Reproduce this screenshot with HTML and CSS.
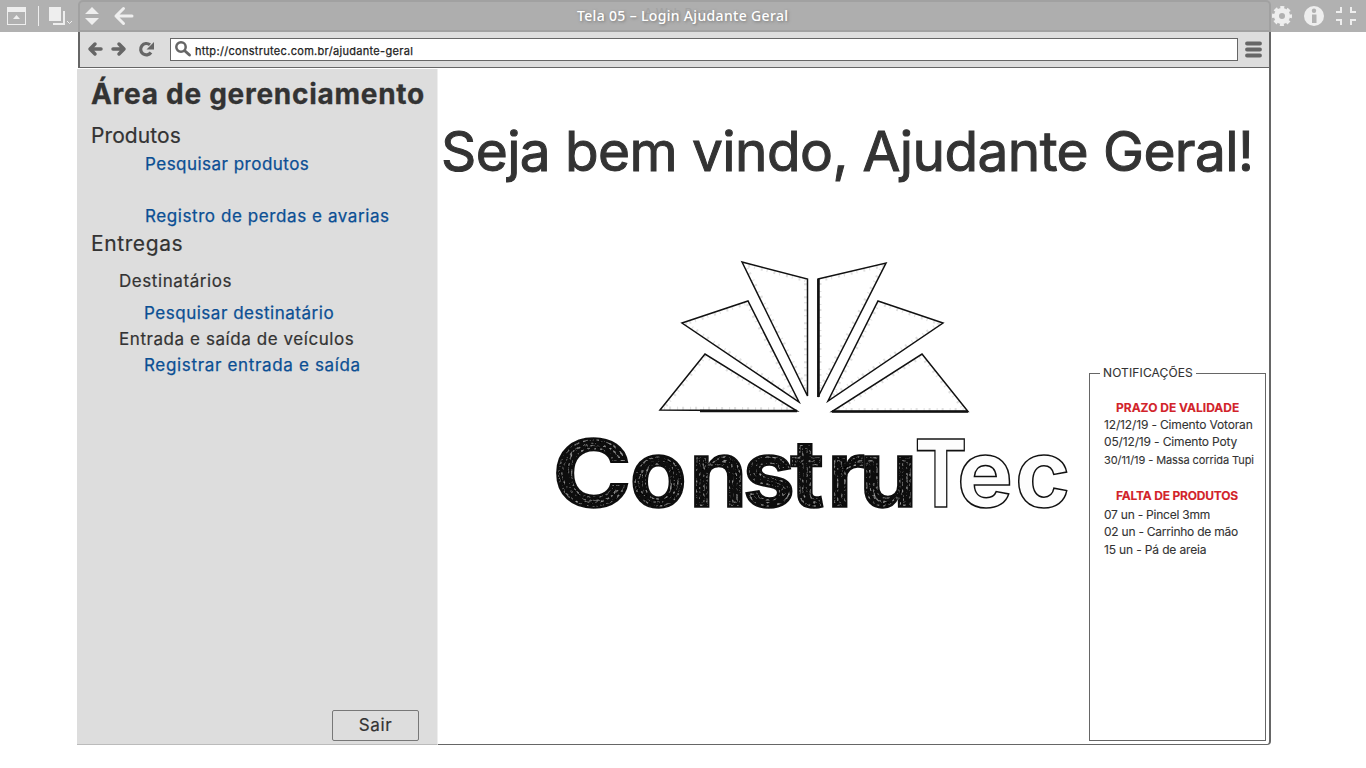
FILE: index.html
```
<!DOCTYPE html>
<html lang="pt-BR">
<head>
<meta charset="utf-8">
<title>Tela 05 – Login Ajudante Geral</title>
<link rel="stylesheet" href="styles.css">
</head>
<body>
<header class="toolbar">
  <div class="tools tools-left">
    <svg width="78" height="32" viewBox="0 0 78 32">
      <path class="lit" fill-rule="evenodd" d="M7 7h19v18H7zM8 12v12h17V12zM13 19l3.500-4 3.500 4z"/>
      <path class="lit" d="M38 6h1v20h-1zM49 7h12v14H49zM63 11h2v14H53v-2h10z"/>
      <path class="lit-line thin" d="M67 21l2.500 2.500L72 21"/>
    </svg>
  </div>
  <div class="title-area">
    <svg class="title-icons" width="60" height="28" viewBox="0 0 60 28">
      <path class="lit" d="M5 12l7-7 7 7zM5 16h14l-7 7z"/>
      <path class="lit-line thick" d="M52 14H36M43.500 6.500L36 14l7.500 7.500"/>
    </svg>
    <span class="ghost">A Web Page</span>
    <h1 class="title">Tela 05 – Login Ajudante Geral</h1>
  </div>
  <div class="tools">
    <svg width="95" height="32" viewBox="0 0 95 32">
      <circle class="gear-ring" cx="11" cy="16" r="5.500"/>
      <circle class="gear-teeth" cx="11" cy="16" r="8.500"/>
      <circle class="lit" cx="43" cy="16" r="10"/>
      <path class="hole" d="M41 14.500h4.500V23H41z"/><circle class="hole" cx="43" cy="10.800" r="2.200"/>
      <path class="lit-line corner" d="M65 12h5V7M85 12h-5V7M65 20h5v5M85 20h-5v5"/>
    </svg>
  </div>
</header>
<div class="window">
  <nav class="chrome">
    <svg class="nav-icons" width="90" height="36" viewBox="0 0 90 36">
      <path class="ink-line arrow" d="M21 17H10.500M15 12l-5 5 5 5M33 17h10.500M39 12l5 5-5 5"/>
      <path class="ink-arc" d="M71 20.500A5.700 5.700 0 1 1 70 12.800"/>
      <path class="ink" d="M74 10v7.500h-7.500z"/>
    </svg>
    <div class="address">
      <svg width="17" height="17" viewBox="0 0 17 17"><circle class="lens" cx="6" cy="6" r="4.700"/><path class="ink-line" d="M10 10l4.500 4"/></svg>
      <span class="url">http://construtec.com.br/ajudante-geral</span>
    </div>
    <svg class="menu" width="17" height="17" viewBox="0 0 17 17"><path class="menu-line" d="M2 2.500h13M2 8.500h13M2 14.500h13"/></svg>
  </nav>
  <div class="content">
    <aside class="sidebar">
      <h2 class="area">Área de gerenciamento</h2>
      <h3 class="group g1">Produtos</h3>
      <a class="link l1">Pesquisar produtos</a>
      <a class="link l2">Registro de perdas e avarias</a>
      <h3 class="group g2">Entregas</h3>
      <h4 class="sub s1">Destinatários</h4>
      <a class="link l3">Pesquisar destinatário</a>
      <h4 class="sub s2">Entrada e saída de veículos</h4>
      <a class="link l4">Registrar entrada e saída</a>
      <button class="exit">Sair</button>
    </aside>
    <main class="main">
      <p class="welcome">Seja bem vindo, Ajudante Geral!</p>
      <div class="row">
        <svg class="logo" width="520" height="284" viewBox="552 256 520 284">
          <defs>
            <filter id="engrave" x="-5%" y="-10%" width="110%" height="120%">
              <feMorphology in="SourceAlpha" operator="erode" radius="2" result="a"/>
              <feMorphology in="SourceAlpha" operator="erode" radius="3" result="b"/>
              <feComposite in="a" in2="b" operator="out" result="c"/>
              <feMorphology in="SourceAlpha" operator="erode" radius="5" result="d"/>
              <feMorphology in="SourceAlpha" operator="erode" radius="6" result="e"/>
              <feComposite in="d" in2="e" operator="out" result="f"/>
              <feMerge result="g"><feMergeNode in="c"/><feMergeNode in="f"/></feMerge>
              <feTurbulence type="fractalNoise" baseFrequency="0.300" numOctaves="2" seed="4"/>
              <feColorMatrix values="0 0 0 0 .4  0 0 0 0 .4  0 0 0 0 .4  3 0 0 0 -1.500" result="n"/>
              <feComposite in="n" in2="g" operator="in" result="h"/>
              <feMerge><feMergeNode in="SourceGraphic"/><feMergeNode in="h"/></feMerge>
            </filter>
            <clipPath id="sheets"><path d="M742 262L807.500 279V396zM682 323L748 301L799 402zM660 410L705 354L797 411zM818 279L886 263L818 397zM878 301L943 323L828 401zM922 354L968 411.500H832z"/></clipPath>
          </defs>
          <path class="grain" clip-path="url(#sheets)" d="M742 262L807.500 279V396zM682 323L748 301L799 402zM660 410L705 354L797 411zM818 279L886 263L818 397zM878 301L943 323L828 401zM922 354L968 411.500H832z"/>
          <g class="sheet">
            <path d="M742 262L807.500 279V396zM682 323L748 301L799 402zM660 410L705 354L797 411zM818 279L886 263L818 397zM878 301L943 323L828 401zM922 354L968 411.500H832z"/>
            <path class="edge" d="M818.500 279V397M832 411.500h136M700 411h97"/>
          </g>
          <g class="dark" filter="url(#engrave)">
            <text class="word" transform="translate(552 506.500) scale(1.150 1)">C</text>
            <text class="word" y="506.500" x="629.500 689 742.500 790 827 859">onstru</text>
          </g>
          <g class="light">
            <text class="word" transform="translate(914.500 506.500) scale(.84 1)">T</text>
            <text class="word" y="506.500" x="957 1015">ec</text>
          </g>
        </svg>
        <section class="notes">
          <div class="legend">NOTIFICAÇÕES</div>
          <h5 class="alert p1">PRAZO DE VALIDADE</h5>
          <p class="note n1">12/12/19 - Cimento Votoran</p>
          <p class="note n2">05/12/19 - Cimento Poty</p>
          <p class="note n3">30/11/19 - Massa corrida Tupi</p>
          <h5 class="alert p2">FALTA DE PRODUTOS</h5>
          <p class="note n4">07 un - Pincel 3mm</p>
          <p class="note n5">02 un - Carrinho de mão</p>
          <p class="note n6">15 un - Pá de areia</p>
        </section>
      </div>
    </main>
  </div>
</div>
</body>
</html>
```
FILE: styles.css
```
* { box-sizing: border-box; margin: 0; padding: 0; }
body { width: 1366px; height: 768px; overflow: hidden; background: #fff; color: #333; font-family: Inter, "Liberation Sans", sans-serif; }
svg { display: block; flex: none; }

.toolbar { display: flex; height: 32px; background: #b1b1b1; }
.tools-left { width: 78px; }
.lit { fill: #eee; }
.gear-ring { fill: none; stroke: #eee; stroke-width: 5; }
.gear-teeth { fill: none; stroke: #eee; stroke-width: 3; stroke-dasharray: 3.900 2.776; stroke-dashoffset: 1.950; }
.hole { fill: #b1b1b1; }
.lit-line { fill: none; stroke: #eee; }
.thin { stroke-width: 1; }
.thick { stroke-width: 3; stroke-linecap: round; stroke-linejoin: round; }
.corner { stroke-width: 2; }
.title-area { position: relative; display: flex; align-items: center; width: 1193px; border: 2px solid #a1a1a1; border-radius: 5px 5px 0 0; background: #aeaeae; }
.title { position: absolute; left: 497px; top: 4px; font: 500 14px/20px "Noto Sans", sans-serif; letter-spacing: .33px; color: #fff; text-shadow: 1px 1px 3px #777; white-space: nowrap; }
.ghost { position: absolute; left: 564px; top: 3px; font-size: 12px; color: #a1a1a1; }

.window { width: 1193px; height: 713px; margin-left: 78px; border: 2px solid #666; border-width: 0 2px 1px 0; border-radius: 0 0 4px 0; }
.chrome { display: flex; align-items: flex-start; height: 36px; background: #ddd; border-left: 2px solid #666; border-bottom: 1px solid #666; }
.address { display: flex; align-items: center; gap: 3px; width: 1068px; height: 23px; margin-top: 6px; padding-left: 4px; border: 1px solid #666; background: #fff; font-size: 11px; color: #222; }
.url { margin-top: 2px; letter-spacing: .31px; -webkit-text-stroke: .25px #222; }
.menu { margin: 9px 0 0 7px; }
.ink { fill: #666; }
.ink-line { fill: none; stroke: #666; stroke-width: 3; stroke-linecap: round; stroke-linejoin: round; }
.arrow { stroke-width: 3.500; }
.ink-arc { fill: none; stroke: #666; stroke-width: 3.200; }
.lens { fill: none; stroke: #666; stroke-width: 2.500; }
.menu-line { stroke: #666; stroke-width: 3.800; stroke-linecap: round; }

.content { display: flex; height: 676px; }
.sidebar { flex: none; display: flex; flex-direction: column; align-items: flex-start; width: 361px; height: 676px; margin: 1px 0 0 -1px; border-right: 1px solid #eee; border-bottom: 1px solid #bbb; background: #ddd; white-space: nowrap; }
.area { margin: 7px 0 0 14px; font-size: 28px; line-height: 37px; letter-spacing: .72px; -webkit-text-stroke: .3px #333; }
.group { margin-left: 13px; font-size: 21px; font-weight: 400; line-height: 26px; -webkit-text-stroke: .2px #333; }
.link { margin-left: 67px; font-size: 17px; line-height: 26px; color: #0b4f94; letter-spacing: .52px; -webkit-text-stroke: .25px #0b4f94; }
.sub { margin-left: 42px; font-size: 17px; font-weight: 400; line-height: 26px; letter-spacing: .57px; -webkit-text-stroke: .2px #333; }
.g1 { margin: 10px 0 0 14px; letter-spacing: .1px; }
.l1 { margin: 2px 0 0 68px; letter-spacing: .48px; }
.l2 { margin: 26px 0 0 68px; letter-spacing: .58px; }
.g2 { margin: 2px 0 0 14px; letter-spacing: .6px; }
.s1 { margin-top: 11px; }
.l3 { margin-top: 6px; }
.l4 { letter-spacing: .66px; }
.exit { width: 87px; height: 31px; margin: auto 0 3px 255px; border: 1px solid #777; border-radius: 2px; background: #ddd; font: 17px/29px Inter, sans-serif; letter-spacing: .6px; color: #333; -webkit-text-stroke: .2px #333; }

.main { flex: 1; display: flex; flex-direction: column; white-space: nowrap; min-width: 0; }
.welcome { margin: 50px 0 0 3px; font-size: 55px; line-height: 66px; letter-spacing: -.6px; -webkit-text-stroke: 1px #333; }
.row { display: flex; margin-top: 72px; }
.logo { margin-left: 114px; }
.grain { fill: none; stroke: #999; stroke-width: 7; stroke-dasharray: 1 6 2 4; opacity: .3; }
.sheet { fill: none; stroke: #111; stroke-width: 1.500; }
.edge { stroke-width: 2.500; }
.word { font: 700 94px Inter, sans-serif; }
.dark { fill: #0b0b0b; stroke: #0b0b0b; stroke-width: 1.500; }
.light { fill: #fdfdfd; stroke: #111; stroke-width: 1.500; }

.notes { width: 177px; height: 368px; margin: 117px 0 0 17px; border: 1px solid #666; font-size: 12px; line-height: 17px; -webkit-text-stroke: .1px; }
.legend { width: 96px; height: 17px; margin: -10px 0 0 10px; padding-left: 3px; background: #fff; letter-spacing: .13px; }
.alert { margin-left: 26px; font-size: 12px; color: #d2232a; }
.note { margin-left: 14px; letter-spacing: -.15px; }
.p1 { margin-top: 18px; }
.n3 { margin-top: 2px; font-size: 11px; letter-spacing: -.09px; }
.p2 { margin-top: 18px; letter-spacing: -.19px; }
.n4 { margin-top: 2px; letter-spacing: -.23px; }
.n5 { letter-spacing: -.24px; }
.n6 { margin-top: 1px; }
```
